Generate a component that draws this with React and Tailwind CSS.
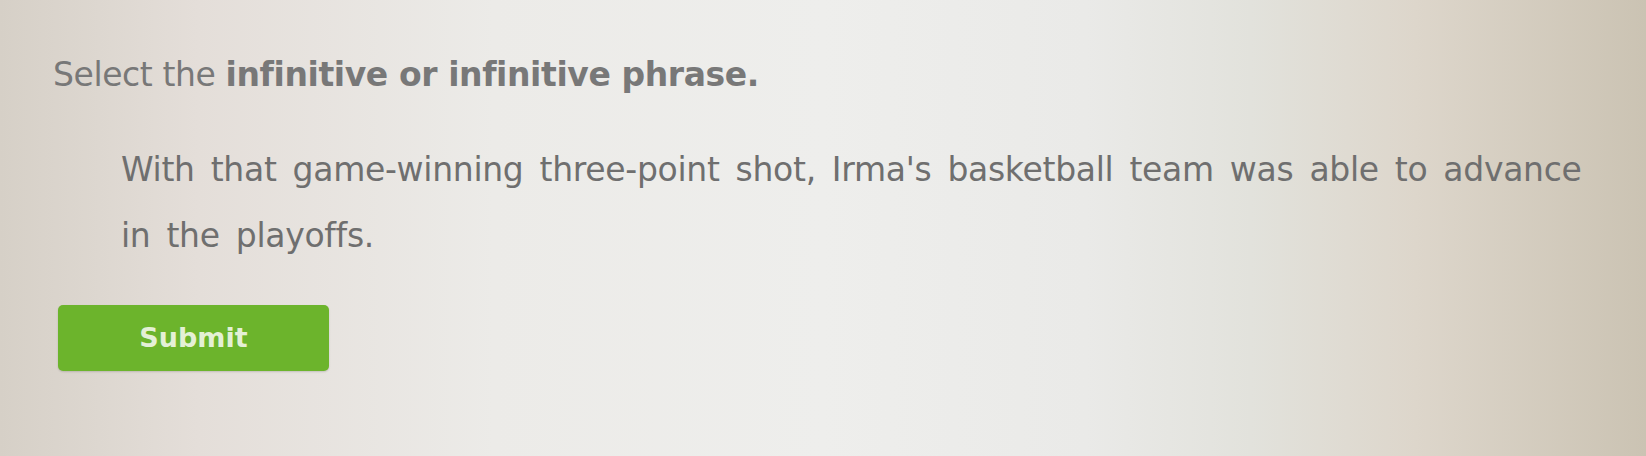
export default function App() {
  const words = "With that game-winning three-point shot, Irma's basketball team was able to advance in the playoffs.".split(" ");

  return (
    <div className="h-[456px] w-full overflow-hidden bg-[linear-gradient(90deg,#d6d0c7_0%,#e4ded9_12%,#ecebe8_30%,#eeeeec_50%,#eaeae8_66%,#e2e2dc_76%,#ddd6cb_86%,#cbc3b3_100%)] font-['DejaVu_Sans',Verdana,sans-serif] text-[#787878]">
      <div className="pl-[53px] pt-[55px]">
        <h1 className="text-[33px] leading-[40px] tracking-[-0.4px]">
          Select the <span className="font-bold">infinitive or infinitive phrase.</span>
        </h1>

        <p className="mt-[42px] ml-[68px] w-[1485px] text-[33px] leading-[66px] tracking-[-0.3px] text-[#6f6f6f]">
          {words.map((w, i) => (
            <span key={i} className="mr-[16px] inline-block">
              {w}
            </span>
          ))}
        </p>

        <button className="mt-[36px] ml-[5px] flex h-[66px] w-[271px] items-center justify-center rounded-[5px] bg-[#6cb42c] text-[27px] font-bold text-[#e4f0d6] shadow-[0_1px_2px_rgba(0,0,0,0.15)]">
          Submit
        </button>
      </div>
    </div>
  );
}
